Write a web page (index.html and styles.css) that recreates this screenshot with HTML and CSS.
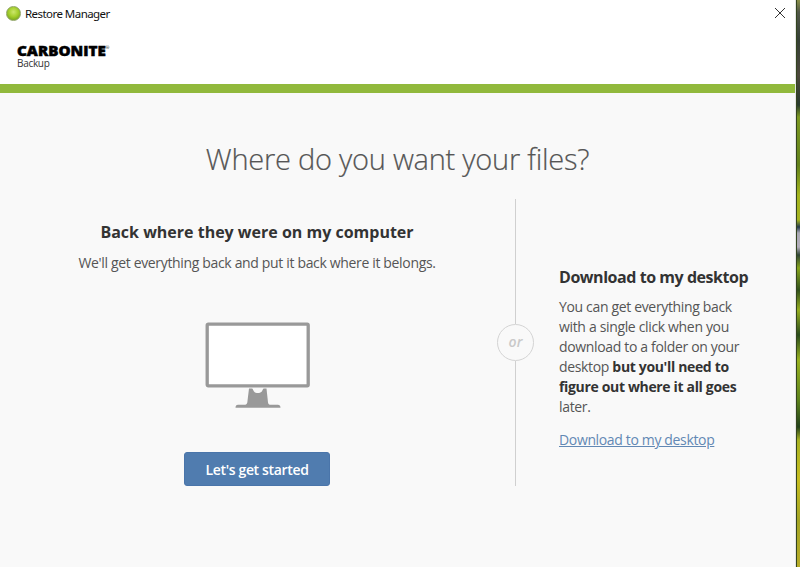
FILE: index.html
```
<!DOCTYPE html>
<html lang="en">
<head>
<meta charset="utf-8">
<title>Restore Manager</title>
<link rel="stylesheet" href="styles.css">
</head>
<body>
<div class="window">
  <div class="titlebar">
    <span class="orb"></span>
    <span class="title">Restore Manager</span>
    <svg class="close" width="12" height="12" viewBox="0 0 12 12"><path d="M1 1l10 10M11 1L1 11" fill="none" stroke="#333" stroke-width="1"/></svg>
  </div>
  <header class="brand">
    <div class="logo"><span class="logo-word">CARBONITE</span><span class="reg">®</span></div>
    <div class="product">Backup</div>
  </header>
  <main class="content">
    <h1>Where do you want your files?</h1>
    <div class="choices">
      <section class="restore">
        <h2>Back where they were on my computer</h2>
        <p>We'll get everything back and put it back where it belongs.</p>
        <svg class="monitor" width="106" height="88" viewBox="0 0 106 88">
          <rect x="2.200" y="2.200" width="101" height="61.600" rx="1" fill="#fff" stroke="#999" stroke-width="3.300"/>
          <path d="M44 66.500h3c.8 0 1.100 1.500 1.800 2.700 1.400 2.400 6.800 2.400 8.200 0 .7-1.200 1-2.700 1.800-2.700h2.700l1.500 14c.2 1.700 1.200 2.300 2.800 2.300h7c1.700 0 2.700 1 2.700 3H30.500c0-2 .8-3 2.500-3h6.200c1.700 0 2.900-.6 3.100-2.300z" fill="#999"/>
        </svg>
        <button>Let's get started</button>
      </section>
      <div class="divider"><i></i><span>or</span><i></i></div>
      <section class="download">
        <h2>Download to my desktop</h2>
        <p>You can get everything back<br>with a single click when you<br>download to a folder on your<br>desktop <b>but you'll need to<br>figure out where it all goes</b><br>later.</p>
        <a href="#">Download to my desktop</a>
      </section>
    </div>
  </main>
</div>
<div class="wallpaper"></div>
</body>
</html>
```
FILE: styles.css
```
* { box-sizing: border-box; }
body {
  margin: 0;
  height: 567px;
  display: flex;
  overflow: hidden;
  font-family: "Open Sans", sans-serif;
  color: #555;
}
h1, h2, p { margin: 0; white-space: nowrap; }
.window { width: 796px; background: #f9f9f9; border-right: 1px solid #e4e4e4; }
.titlebar {
  height: 26px;
  padding: 0 9px 0 6px;
  display: flex;
  align-items: center;
  background: #fff;
}
.orb {
  width: 15px;
  height: 15px;
  border-radius: 50%;
  border: 1px solid #8fa464;
  background: radial-gradient(circle at 50% 38%, #cbe66c 0, #a5cf2d 45%, #80ad20 75%, #a9cc4c 100%);
}
.title { margin-left: 4px; font: 11.500px "Noto Sans", sans-serif; color: #111; letter-spacing: -.55px; }
.close { margin-left: auto; }
.brand { height: 67px; padding: 18px 0 0 17px; background: #fff; border-bottom: 9px solid #91b93c; }
.logo { display: flex; width: max-content; height: 14px; line-height: 14px; color: #000; transform: scaleX(1.085); transform-origin: left; }
.logo-word { font-weight: 800; font-size: 14px; -webkit-text-stroke: .5px #000; }
.reg { font-size: 4px; line-height: 8px; }
.product { font-size: 10px; line-height: 10px; letter-spacing: -.3px; color: #333; }
h1 {
  padding-top: 46px;
  font-size: 29px;
  line-height: 40px;
  font-weight: 300;
  letter-spacing: -.26px;
  text-align: center;
  -webkit-text-stroke: .2px #555;
}
.choices { display: flex; margin-top: 20px; }
.restore {
  width: 497px;
  padding: 22px 0 0 17px;
  display: flex;
  flex-direction: column;
  align-items: center;
}
h2 { font-size: 16px; line-height: 22px; font-weight: 700; color: #333; }
p { font-size: 14px; line-height: 20px; letter-spacing: -.34px; }
.restore p { margin-top: 10px; }
.monitor { margin: 49px 0 0 2px; }
button {
  width: 146px;
  height: 34px;
  margin-top: 42px;
  padding: 0;
  border: 1px solid #4a75aa;
  border-radius: 3px;
  background: #507caf;
  color: #fff;
  font: 600 14px "Open Sans", sans-serif;
  letter-spacing: -.34px;
}
.divider { width: 37px; height: 287px; display: flex; flex-direction: column; align-items: center; }
.divider i { width: 1px; flex: 1; background: #d0d0d0; }
.divider span {
  width: 37px;
  height: 37px;
  border: 1.500px solid #d4d4d4;
  border-radius: 50%;
  font: italic 600 14px/33px "Open Sans", sans-serif;
  text-align: center;
  color: #c9c9c9;
}
.download { padding: 67px 0 0 25px; }
.download h2 { letter-spacing: -.45px; }
.download p { margin-top: 9px; }
.download b { color: #333; }
.download a { display: block; margin-top: 13px; font-size: 14px; line-height: 20px; letter-spacing: -.35px; color: #6288b4; }
.wallpaper {
  width: 4px;
  border-left: 1px solid #33441f;
  background: linear-gradient(#8a9048 0, #515748 12px, #354035 40px, #4d483c 75px, #283b2c 105px, #7d9922 117px, #62811b 165px, #a4b51d 195px, #a5b322 220px, #24394a 227px, #aaa9b4 233px, #b3aebb 247px, #304535 255px, #87a51c 268px, #31501b 290px, #96ae20 310px, #294b1b 335px, #99b220 360px, #5d831b 400px, #23411b 427px, #a8b222 440px, #c6bd20 480px, #a4a524 520px, #b7ac28 567px);
}
```
